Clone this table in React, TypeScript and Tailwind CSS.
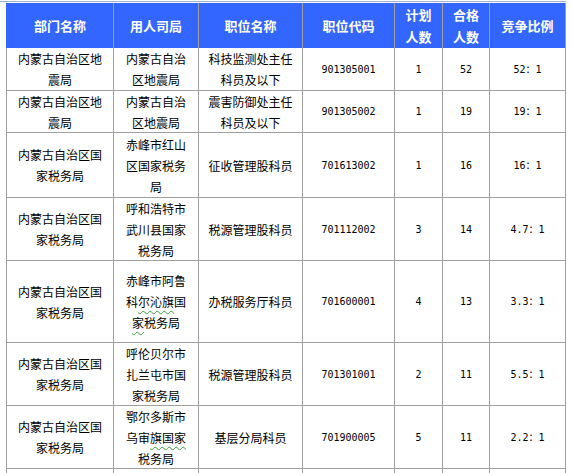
import React from "react";

const W = ["w-[108px] border-l", "w-[85px]", "w-[104px]", "w-[92px]", "w-[48px]", "w-[47px]", "w-[76px]"];

type Row = {
  h: string;
  a: React.ReactNode;
  b: React.ReactNode;
  c: React.ReactNode;
  code: string;
  plan: string;
  pass: string;
  ratio: string;
};

const wavy = "underline decoration-wavy decoration-[#3c9a3c] decoration-1 underline-offset-[3px]";

const guo = (
  <>
    内蒙古自治区国
    <br />
    家税务局
  </>
);

const rows: Row[] = [
  {
    h: "h-[43px]",
    a: (<>内蒙古自治区地<br />震局</>),
    b: (<>内蒙古自治<br />区地震局</>),
    c: (<>科技监测处主任<br />科员及以下</>),
    code: "901305001", plan: "1", pass: "52", ratio: "52：1",
  },
  {
    h: "h-[42px]",
    a: (<>内蒙古自治区地<br />震局</>),
    b: (<>内蒙古自治<br />区地震局</>),
    c: (<>震害防御处主任<br />科员及以下</>),
    code: "901305002", plan: "1", pass: "19", ratio: "19：1",
  },
  {
    h: "h-[65px]",
    a: guo,
    b: (<>赤峰市红山<br />区国家税务<br />局</>),
    c: "征收管理股科员",
    code: "701613002", plan: "1", pass: "16", ratio: "16：1",
  },
  {
    h: "h-[63px]",
    a: guo,
    b: (<>呼和浩特市<br />武川县国家<br />税务局</>),
    c: "税源管理股科员",
    code: "701112002", plan: "3", pass: "14", ratio: "4.7：1",
  },
  {
    h: "h-[82px]",
    a: guo,
    b: (<>赤峰市阿鲁<br />科<span className={wavy}>尔沁旗</span>国<br /><span className={wavy}>家</span>税务局</>),
    c: "办税服务厅科员",
    code: "701600001", plan: "4", pass: "13", ratio: "3.3：1",
  },
  {
    h: "h-[63px]",
    a: guo,
    b: (<>呼伦贝尔市<br />扎兰屯市国<br />家税务局</>),
    c: "税源管理股科员",
    code: "701301001", plan: "2", pass: "11", ratio: "5.5：1",
  },
  {
    h: "h-[63px]",
    a: guo,
    b: (<>鄂尔多斯市<br />乌审<span className={wavy}>旗国家</span><br />税务局</>),
    c: "基层分局科员",
    code: "701900005", plan: "5", pass: "11", ratio: "2.2：1",
  },
];

const cjk = { fontFamily: '"Noto Sans CJK SC", sans-serif' };
const mono = { fontFamily: '"DejaVu Sans Mono", "Noto Sans CJK SC", monospace' };

function Cell({ i, children, m }: { i: number; children?: React.ReactNode; m?: boolean }) {
  return (
    <div
      className={`${W[i]} shrink-0 h-full border-r border-b border-[#a0a0a0] flex items-center justify-center text-center whitespace-nowrap text-black ${
        m ? "text-[10px]" : "text-[12px] leading-[21px]"
      }`}
      style={m ? mono : cjk}
    >
      <div>{children}</div>
    </div>
  );
}

function HeadCell({ i, children }: { i: number; children: React.ReactNode }) {
  return (
    <div
      className={`${W[i]} shrink-0 h-full border-r border-[#a0a0a0] ${
        i === 0 ? "border-l-[#3366ff]" : ""
      } flex items-center justify-center text-center text-white font-bold text-[13px] leading-[22px] whitespace-nowrap`}
      style={cjk}
    >
      <div>{children}</div>
    </div>
  );
}

export default function App() {
  return (
    <div className="w-[573px] h-[473px] bg-white overflow-hidden">
      <div className="h-px w-[566px] mt-px bg-[#a4b0d8]" />
      <div className="ml-[6px] mt-px w-[560px]">
        <div className="flex h-[45px] bg-[#3366ff]">
          <HeadCell i={0}>部门名称</HeadCell>
          <HeadCell i={1}>用人司局</HeadCell>
          <HeadCell i={2}>职位名称</HeadCell>
          <HeadCell i={3}>职位代码</HeadCell>
          <HeadCell i={4}>计划<br />人数</HeadCell>
          <HeadCell i={5}>合格<br />人数</HeadCell>
          <HeadCell i={6}>竞争比例</HeadCell>
        </div>
        {rows.map((r, k) => (
          <div key={k} className={`flex ${r.h}`}>
            <Cell i={0}>{r.a}</Cell>
            <Cell i={1}>{r.b}</Cell>
            <Cell i={2}>{r.c}</Cell>
            <Cell i={3} m>{r.code}</Cell>
            <Cell i={4} m>{r.plan}</Cell>
            <Cell i={5} m>{r.pass}</Cell>
            <Cell i={6} m>{r.ratio}</Cell>
          </div>
        ))}
        <div className="flex h-[40px]">
          {W.map((_, i) => (
            <Cell key={i} i={i} />
          ))}
        </div>
      </div>
    </div>
  );
}
